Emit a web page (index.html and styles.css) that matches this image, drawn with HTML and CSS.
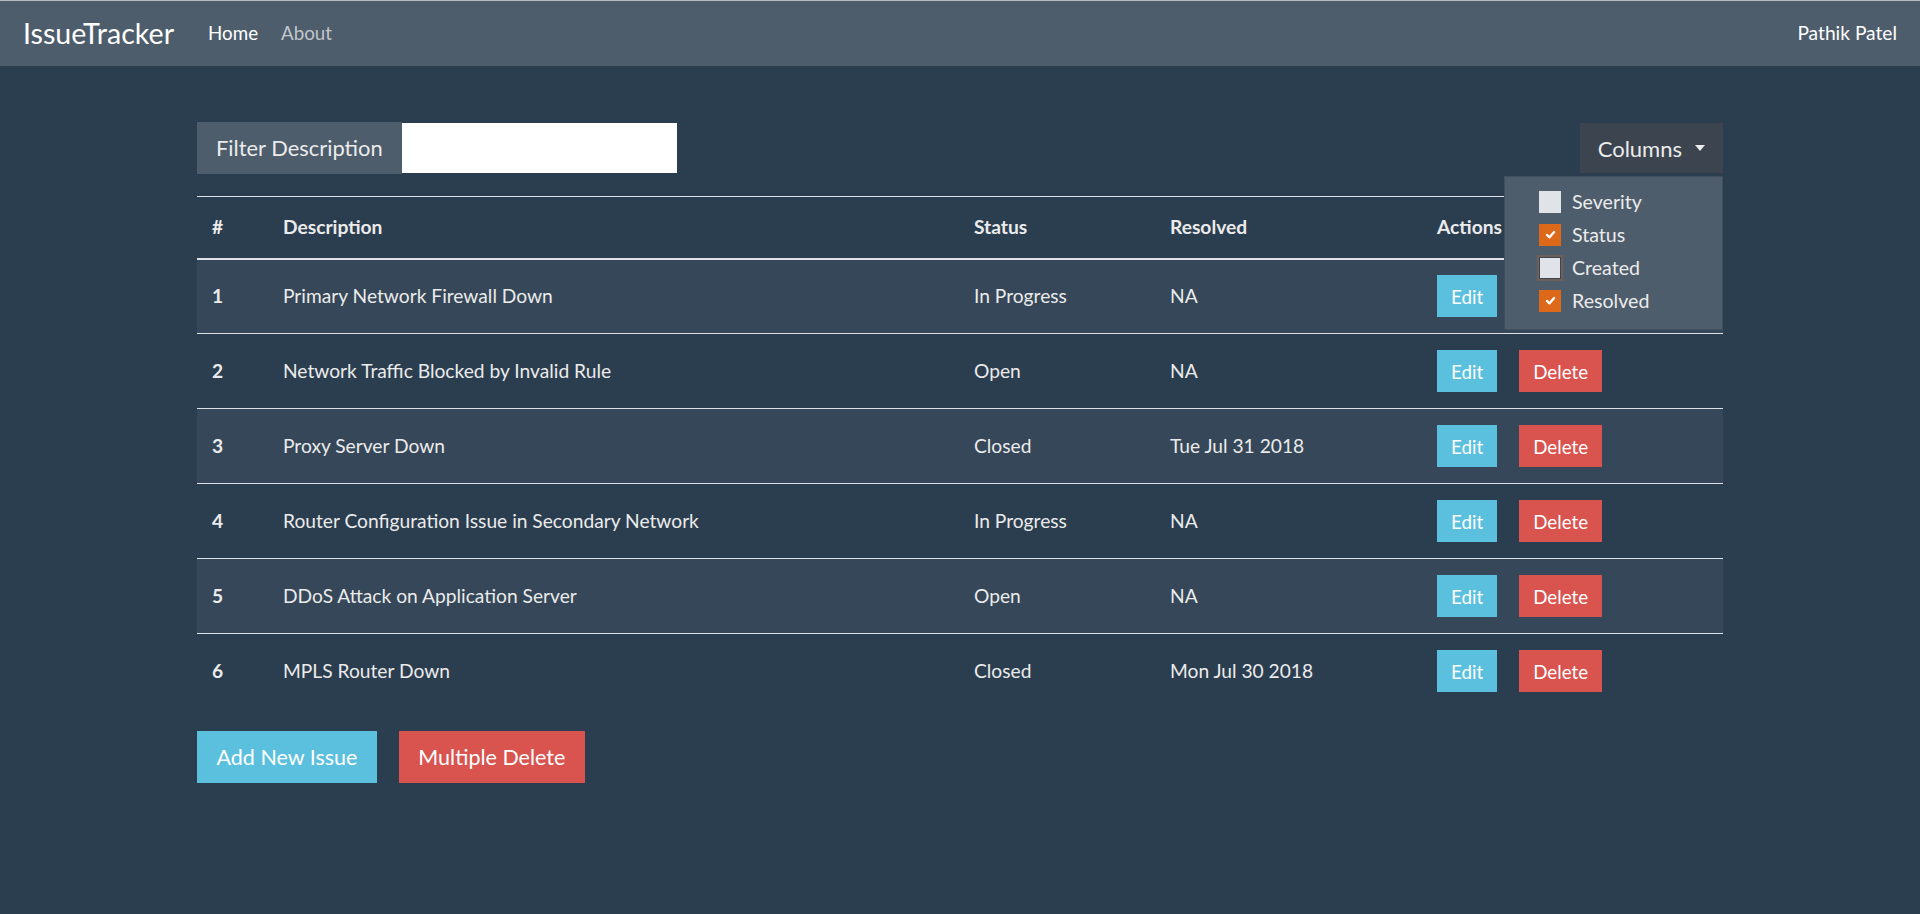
FILE: index.html
```html
<!DOCTYPE html>
<html lang="en">
<head>
<meta charset="utf-8">
<title>IssueTracker</title>
<link rel="stylesheet" href="styles.css">
</head>
<body>
<nav class="navbar">
  <div class="nav-left">
    <a class="brand" href="#">IssueTracker</a>
    <a class="nav-link active" href="#">Home</a>
    <a class="nav-link" href="#">About</a>
  </div>
  <div class="nav-user">Pathik Patel</div>
</nav>

<main class="container">
  <div class="toolbar">
    <div class="input-group">
      <span class="input-label">Filter Description</span>
      <input class="input-field" type="text">
    </div>
    <div class="dropdown">
      <button class="btn-columns">Columns <span class="caret"></span></button>
      <div class="dropdown-menu">
        <label class="dd-item"><span class="check"></span>Severity</label>
        <label class="dd-item"><span class="check checked"><svg viewBox="0 0 10 10" width="11" height="11"><path d="M1.8 5.4 L4.1 7.6 L8.3 2.8" fill="none" stroke="#fff" stroke-width="2.1" stroke-linecap="round" stroke-linejoin="round"/></svg></span>Status</label>
        <label class="dd-item"><span class="check focused"></span>Created</label>
        <label class="dd-item"><span class="check checked"><svg viewBox="0 0 10 10" width="11" height="11"><path d="M1.8 5.4 L4.1 7.6 L8.3 2.8" fill="none" stroke="#fff" stroke-width="2.1" stroke-linecap="round" stroke-linejoin="round"/></svg></span>Resolved</label>
      </div>
    </div>
  </div>

  <table class="issues">
    <thead>
      <tr>
        <th class="col-id">#</th>
        <th class="col-desc">Description</th>
        <th class="col-status">Status</th>
        <th class="col-resolved">Resolved</th>
        <th class="col-actions">Actions</th>
      </tr>
    </thead>
    <tbody>
      <tr>
        <td class="num">1</td><td>Primary Network Firewall Down</td><td>In Progress</td><td>NA</td>
        <td><button class="btn btn-info">Edit</button><button class="btn btn-danger">Delete</button></td>
      </tr>
      <tr>
        <td class="num">2</td><td>Network Traffic Blocked by Invalid Rule</td><td>Open</td><td>NA</td>
        <td><button class="btn btn-info">Edit</button><button class="btn btn-danger">Delete</button></td>
      </tr>
      <tr>
        <td class="num">3</td><td>Proxy Server Down</td><td>Closed</td><td>Tue Jul 31 2018</td>
        <td><button class="btn btn-info">Edit</button><button class="btn btn-danger">Delete</button></td>
      </tr>
      <tr>
        <td class="num">4</td><td>Router Configuration Issue in Secondary Network</td><td>In Progress</td><td>NA</td>
        <td><button class="btn btn-info">Edit</button><button class="btn btn-danger">Delete</button></td>
      </tr>
      <tr>
        <td class="num">5</td><td>DDoS Attack on Application Server</td><td>Open</td><td>NA</td>
        <td><button class="btn btn-info">Edit</button><button class="btn btn-danger">Delete</button></td>
      </tr>
      <tr>
        <td class="num">6</td><td>MPLS Router Down</td><td>Closed</td><td>Mon Jul 30 2018</td>
        <td><button class="btn btn-info">Edit</button><button class="btn btn-danger">Delete</button></td>
      </tr>
    </tbody>
  </table>

  <div class="bottom-actions">
    <button class="btn-lg btn-info">Add New Issue</button>
    <button class="btn-lg btn-danger">Multiple Delete</button>
  </div>
</main>
</body>
</html>
```

FILE: styles.css
```css
* { box-sizing: border-box; }

html, body {
  margin: 0;
  padding: 0;
}

body {
  background: #2b3e50;
  color: #ebebeb;
  font-family: Lato, "Open Sans", "Liberation Sans", sans-serif;
  font-size: 18.75px;
  line-height: 1.5;
  min-height: 914px;
}

.navbar {
  height: 66px;
  background: #4e5d6c;
  border-top: 1px solid #b8bcc0;
  display: flex;
  align-items: center;
  justify-content: space-between;
  padding: 0 23px;
}

.nav-left {
  display: flex;
  align-items: center;
}

.brand {
  color: #fff;
  text-decoration: none;
  font-size: 28.6px;
  margin-right: 34px;
  line-height: 1;
}

.nav-link {
  color: rgba(255, 255, 255, 0.66);
  text-decoration: none;
  margin-right: 23px;
}

.nav-link.active {
  color: #fff;
}

.nav-user {
  color: #fff;
  font-size: 19.2px;
}

.container {
  width: 1526px;
  margin: 56px auto 0;
}

.toolbar {
  display: flex;
  justify-content: space-between;
  align-items: flex-start;
  position: relative;
}

.input-group {
  display: flex;
  align-items: center;
  height: 52px;
}

.input-label {
  background: #4e5d6c;
  height: 52px;
  display: flex;
  align-items: center;
  padding: 0 19px;
  font-size: 21.9px;
  white-space: nowrap;
}

.input-field {
  width: 275px;
  height: 50px;
  border: 0;
  background: #fff;
  margin: 0;
  padding: 0 12px;
  outline: none;
}

.dropdown {
  position: relative;
  padding-top: 1px;
}

.btn-columns {
  background: #3b444f;
  color: #ebebeb;
  border: 0;
  height: 50px;
  font-family: inherit;
  font-size: 22px;
  padding: 0 18px;
  display: flex;
  align-items: center;
}

.caret {
  display: inline-block;
  width: 0;
  height: 0;
  border-left: 5.5px solid transparent;
  border-right: 5.5px solid transparent;
  border-top: 6px solid #ebebeb;
  margin-left: 13px;
}

.dropdown-menu {
  position: absolute;
  top: 54px;
  right: 0;
  width: 219px;
  height: 154px;
  background: #4e5d6c;
  border: 1px solid rgba(0, 0, 0, 0.15);
  padding: 8px 0 0 34px;
  z-index: 10;
}

.dd-item {
  display: flex;
  align-items: center;
  height: 33px;
  color: #ebebeb;
  font-size: 19.6px;
}

.check {
  width: 22px;
  height: 22px;
  background: #e0e3e7;
  margin-right: 11px;
  display: flex;
  align-items: center;
  justify-content: center;
  flex: none;
}

.check.checked {
  background: #df691a;
}

.check.focused {
  border: 1px solid #3c4651;
  box-shadow: 0 0 0 2px #6e5f58;
}

.issues {
  width: 100%;
  border-collapse: collapse;
  margin-top: 22px;
  font-size: 19.2px;
}

.issues th {
  text-align: left;
  font-weight: bold;
  height: 62px;
  padding: 0 15px;
  border-top: 1px solid #dee2e6;
  border-bottom: 2px solid #dee2e6;
  vertical-align: middle;
}

.col-id { width: 71px; }
.col-desc { width: 691px; }
.col-status { width: 196px; }
.col-resolved { width: 267px; }
.col-actions { width: 301px; }

.issues td {
  height: 75px;
  padding: 0 15px;
  border-top: 1px solid #dee2e6;
  vertical-align: middle;
}

.issues tbody tr:first-child td {
  border-top: 0;
}

.issues tbody tr:nth-child(odd) {
  background: rgba(255, 255, 255, 0.05);
}

.issues td.num {
  font-weight: bold;
}

.btn {
  height: 42px;
  border: 0;
  padding: 0 14px;
  font-family: inherit;
  font-size: 18.75px;
  color: #fff;
  vertical-align: middle;
}

.btn + .btn {
  margin-left: 22px;
}

.btn-info { background: #5bc0de; color: #fff; }
.btn-danger { background: #d9534f; color: #fff; }

.bottom-actions {
  display: flex;
  gap: 22px;
  margin-top: 22px;
}

.btn-lg {
  height: 52px;
  border: 0;
  padding: 0 19.5px;
  font-family: inherit;
  font-size: 21.5px;
}
```
